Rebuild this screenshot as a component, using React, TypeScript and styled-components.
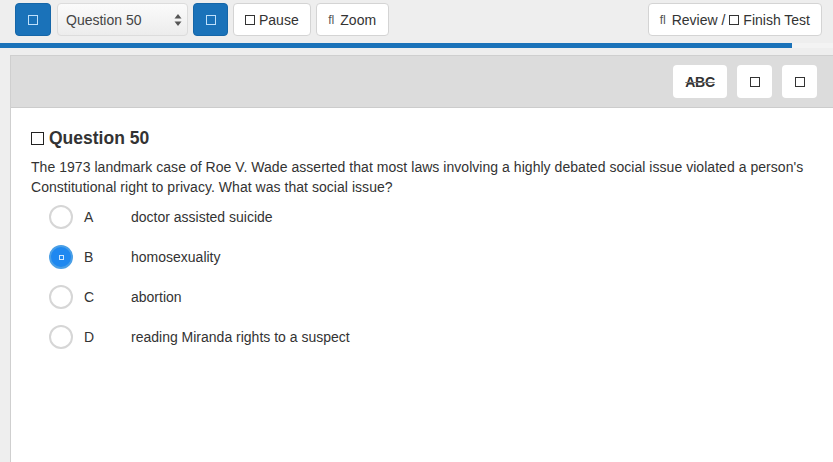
import styled, { createGlobalStyle } from 'styled-components';

const Global = createGlobalStyle`
  html, body {
    margin: 0;
    padding: 0;
    background: #eeeeee;
    font-family: "Liberation Sans", Arial, sans-serif;
    color: #333;
    overflow: hidden;
  }
`;

const Page = styled.div`
  width: 833px;
  height: 462px;
  display: flex;
  flex-direction: column;
`;

const Toolbar = styled.div`
  display: flex;
  align-items: center;
  gap: 5px;
  height: 39px;
  padding: 0 11px 0 15px;
  box-sizing: border-box;
`;

const Spacer = styled.div`
  flex: 1;
`;

const Btn = styled.button<{ $primary?: boolean; $w?: number }>`
  height: 33px;
  ${(p) => (p.$w ? `width: ${p.$w}px;` : 'padding: 0 11px;')}
  border-radius: 4px;
  border: 1px solid ${(p) => (p.$primary ? '#1566a8' : '#d4d4d4')};
  background: ${(p) => (p.$primary ? '#1a72b9' : '#fff')};
  color: ${(p) => (p.$primary ? '#cfe6fa' : '#333')};
  font-family: "Liberation Sans", Arial, sans-serif;
  font-size: 14px;
  display: flex;
  align-items: center;
  justify-content: center;
  gap: 4px;
  cursor: pointer;
  box-sizing: border-box;
`;

const Glyph = styled.span`
  font-size: 12px;
  color: #555;
  margin-right: 2px;
`;

const Box = styled.span<{ $size?: number; $color?: string }>`
  display: inline-block;
  width: ${(p) => p.$size ?? 10}px;
  height: ${(p) => p.$size ?? 10}px;
  border: 1.5px solid ${(p) => p.$color ?? '#333'};
  box-sizing: border-box;
`;

const Select = styled.div`
  width: 131px;
  height: 33px;
  margin-left: 1px;
  border: 1px solid #dcdcdc;
  border-radius: 4px;
  background: linear-gradient(#fbfbfb, #ececec);
  box-sizing: border-box;
  display: flex;
  align-items: center;
  justify-content: space-between;
  padding: 0 5px 0 8px;
  font-size: 14px;
  color: #444;
`;

const Track = styled.div`
  height: 5px;
  margin-top: 4px;
  background: #f3f3f3;
  display: flex;
`;

const Fill = styled.div`
  height: 100%;
  background: #1a72b9;
`;

const Panel = styled.div`
  margin: 7px 0 0 10px;
  flex: 1;
  border: 1px solid #cfcfcf;
  border-right: none;
  border-bottom: none;
  background: #fff;
  display: flex;
  flex-direction: column;
`;

const PanelHead = styled.div`
  height: 51px;
  background: #dcdcdc;
  border-bottom: 1px solid #cccccc;
  display: flex;
  align-items: center;
  justify-content: flex-end;
  gap: 10px;
  padding-right: 16px;
`;

const HeadBtn = styled.button<{ $w: number }>`
  width: ${(p) => p.$w}px;
  height: 33px;
  border: none;
  border-radius: 4px;
  background: #fff;
  display: flex;
  align-items: center;
  justify-content: center;
  font-family: "Liberation Sans", Arial, sans-serif;
  font-weight: bold;
  font-size: 14px;
  color: #333;
`;

const Strike = styled.span`
  text-decoration: line-through;
  text-decoration-color: #777;
  letter-spacing: -0.3px;
`;

const Body = styled.div`
  padding: 19px 20px 0 20px;
`;

const Title = styled.h3`
  margin: 0;
  font-size: 17.5px;
  font-weight: bold;
  display: flex;
  align-items: center;
  gap: 5px;
  height: 22px;
`;

const Prompt = styled.p`
  margin: 8px 0 0;
  font-size: 14px;
  line-height: 20px;
  letter-spacing: 0.04px;
  color: #333;
`;

const Options = styled.div`
  display: flex;
  flex-direction: column;
`;

const Option = styled.label`
  height: 40px;
  display: flex;
  align-items: center;
  font-size: 14px;
  color: #333;
`;

const Radio = styled.span<{ $on?: boolean }>`
  width: 24px;
  height: 24px;
  margin-left: 18px;
  border-radius: 50%;
  box-sizing: border-box;
  border: 2px solid ${(p) => (p.$on ? '#4a9fe6' : '#d6d6d6')};
  background: ${(p) => (p.$on ? '#1e88f0' : '#fff')};
  display: flex;
  align-items: center;
  justify-content: center;
`;

const Letter = styled.span`
  width: 47px;
  margin-left: 11px;
`;

const options = [
  { k: 'A', t: 'doctor assisted suicide' },
  { k: 'B', t: 'homosexuality', on: true },
  { k: 'C', t: 'abortion' },
  { k: 'D', t: 'reading Miranda rights to a suspect' },
];

const App = () => {
  return (
    <Page>
      <Global />
      <Toolbar>
        <Btn $primary $w={36}>
          <Box $color="#bfe0fb" />
        </Btn>
        <Select>
          <span>Question 50</span>
          <svg width="8" height="14" viewBox="0 0 8 14">
            <path d="M4 1 L7.5 5.5 H0.5 Z" fill="#555" />
            <path d="M4 13 L7.5 8.5 H0.5 Z" fill="#555" />
          </svg>
        </Select>
        <Btn $primary $w={35}>
          <Box $color="#bfe0fb" />
        </Btn>
        <Btn>
          <Box />
          Pause
        </Btn>
        <Btn $w={73}>
          <Glyph>ﬂ</Glyph>Zoom
        </Btn>
        <Spacer />
        <Btn>
          <Glyph>ﬂ</Glyph>Review / <Box /> Finish Test
        </Btn>
      </Toolbar>
      <Track>
        <Fill style={{ width: `${(792 / 833) * 100}%` }} />
      </Track>
      <Panel>
        <PanelHead>
          <HeadBtn $w={54}>
            <Strike>ABC</Strike>
          </HeadBtn>
          <HeadBtn $w={35}>
            <Box />
          </HeadBtn>
          <HeadBtn $w={35}>
            <Box />
          </HeadBtn>
        </PanelHead>
        <Body>
          <Title>
            <Box $size={13} $color="#222" />
            Question 50
          </Title>
          <Prompt>
            The 1973 landmark case of Roe V. Wade asserted that most laws involving a highly debated social issue violated a
            person's Constitutional right to privacy. What was that social issue?
          </Prompt>
          <Options>
            {options.map((o) => (
              <Option key={o.k}>
                <Radio $on={o.on}>{o.on && <Box $size={5} $color="#cfe8ff" />}</Radio>
                <Letter>{o.k}</Letter>
                {o.t}
              </Option>
            ))}
          </Options>
        </Body>
      </Panel>
    </Page>
  );
};

export default App;
